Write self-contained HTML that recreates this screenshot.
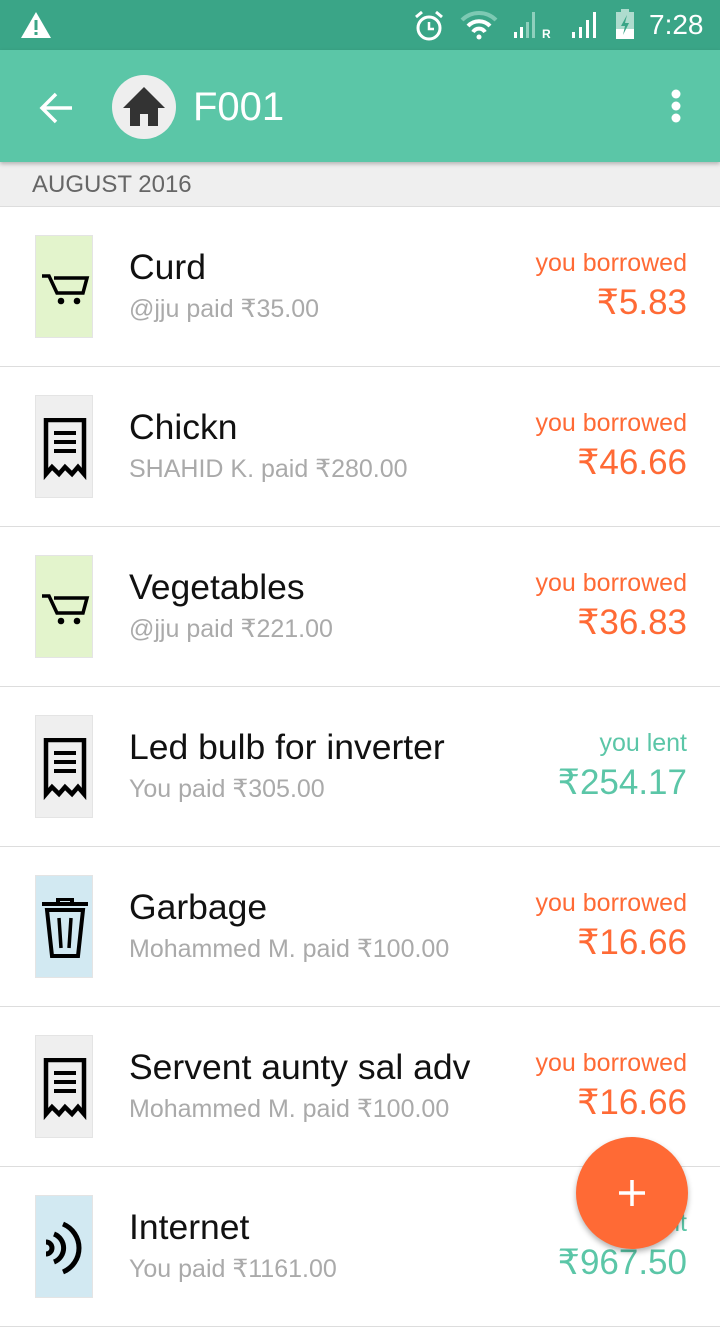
<html><head><style>
body{margin:0;width:720px;height:1280px;overflow:hidden;font-family:"Liberation Sans",sans-serif;background:#fff;position:relative}
.sb{height:50px;background:#3aa587;position:relative;color:#fff}
.ab{height:112px;background:#5bc6a7;position:relative;box-shadow:0 2px 4px rgba(0,0,0,.25);z-index:2}
.hd{height:44px;background:#efefef;border-bottom:1px solid #ddd;color:#666;font-size:24px;line-height:46px;padding-left:32px}
.row{height:159px;border-bottom:1px solid #ddd;position:relative}
.ic{position:absolute;left:35px;top:28px;width:58px;height:103px;border:1px solid #e4e4e4;box-sizing:border-box;overflow:hidden}
.ic svg{position:absolute;left:3px;top:22px}
.t{position:absolute;left:129px;top:40px;font-size:35.5px;color:#111}
.s{position:absolute;left:129px;top:87px;font-size:25px;color:#aaa}
.l{position:absolute;right:33px;top:42px;font-size:25px}
.a{position:absolute;right:33px;top:76px;font-size:35px}
.o{color:#ff6a35}.g{color:#5bc6a7}
</style></head><body>
<div class="sb">
<svg style="position:absolute;left:20px;top:11px" width="32" height="28"><path d="M16 1L31 27H1Z" fill="#fff"/><rect x="14.5" y="9" width="3" height="10" fill="#3aa587"/><rect x="14.5" y="21" width="3" height="3" fill="#3aa587"/></svg>
<svg style="position:absolute;left:412px;top:10px" width="34" height="32"><circle cx="17" cy="18" r="11" fill="none" stroke="#fff" stroke-width="3"/><path d="M17 12v7h5" stroke="#fff" stroke-width="2.5" fill="none"/><path d="M4 7l6-5M30 7l-6-5" stroke="#fff" stroke-width="3"/></svg>
<svg style="position:absolute;left:460px;top:10px" width="38" height="30"><path d="M2 10a24 24 0 0 1 34 0" stroke="#7dc9b3" stroke-width="4" fill="none"/><path d="M8 16a15 15 0 0 1 22 0M13 22a7 7 0 0 1 12 0" stroke="#fff" stroke-width="4" fill="none"/><circle cx="19" cy="27" r="2.5" fill="#fff"/></svg>
<svg style="position:absolute;left:514px;top:10px" width="40" height="30"><rect x="0" y="22" width="3" height="6" fill="#fff"/><rect x="6" y="17" width="3" height="11" fill="#fff"/><rect x="12" y="12" width="3" height="16" fill="#8fd0bd"/><rect x="18" y="2" width="3" height="26" fill="#8fd0bd"/><text x="28" y="28" font-size="12" fill="#fff" font-weight="bold">R</text></svg>
<svg style="position:absolute;left:572px;top:10px" width="30" height="30"><rect x="0" y="22" width="3" height="6" fill="#fff"/><rect x="7" y="17" width="3" height="11" fill="#fff"/><rect x="14" y="10" width="3" height="18" fill="#fff"/><rect x="21" y="2" width="3" height="26" fill="#fff"/></svg>
<svg style="position:absolute;left:614px;top:9px" width="22" height="32"><rect x="7" y="0" width="8" height="3" fill="#aedcce"/><rect x="2" y="3" width="18" height="27" fill="#aedcce"/><rect x="2" y="20" width="18" height="10" fill="#fff"/><path d="M13 6l-6 11h4l-2 9 6-12h-4z" fill="#3aa587"/></svg>
<div style="position:absolute;left:649px;top:9px;font-size:28px">7:28</div>
</div>
<div class="ab">
<svg style="position:absolute;left:38px;top:42px" width="36" height="32"><path d="M34 16H4M18 2L4 16l14 14" stroke="#fff" stroke-width="3.5" fill="none"/></svg>
<div style="position:absolute;left:112px;top:25px;width:64px;height:64px;border-radius:50%;background:#eee"></div>
<svg style="position:absolute;left:120px;top:34px" width="48" height="44"><path d="M24 3L3 24h7v18h10V30h8v12h10V24h7z" fill="#333"/></svg>
<div style="position:absolute;left:193px;top:35px;font-size:40px;color:#fff">F001</div>
<svg style="position:absolute;left:668px;top:38px" width="16" height="40"><circle cx="8" cy="6" r="4.5" fill="#fff"/><circle cx="8" cy="18" r="4.5" fill="#fff"/><circle cx="8" cy="30" r="4.5" fill="#fff"/></svg>
</div>
<div class="hd">AUGUST 2016</div>

<div class="row"><div class="ic" style="background:#e3f4cc"><svg width="52" height="60"><path d="M3 18h7l8 17h26l4-15H15" stroke="#000" stroke-width="3.5" fill="none"/><circle cx="22" cy="43" r="3.3"/><circle cx="38" cy="43" r="3.3"/></svg></div><div class="t">Curd</div><div class="s">@jju paid ₹35.00</div><div class="l o">you borrowed</div><div class="a o">₹5.83</div></div>

<div class="row"><div class="ic" style="background:#efefef"><svg width="52" height="64"><path d="M7 2h38v54l-6-7-6 7-7-7-6 7-7-7-6 7z" fill="none" stroke="#000" stroke-width="4.5"/><path d="M15 15h22M15 24h22M15 33h22" stroke="#000" stroke-width="4"/></svg></div><div class="t">Chickn</div><div class="s">SHAHID K. paid ₹280.00</div><div class="l o">you borrowed</div><div class="a o">₹46.66</div></div>

<div class="row"><div class="ic" style="background:#e3f4cc"><svg width="52" height="60"><path d="M3 18h7l8 17h26l4-15H15" stroke="#000" stroke-width="3.5" fill="none"/><circle cx="22" cy="43" r="3.3"/><circle cx="38" cy="43" r="3.3"/></svg></div><div class="t">Vegetables</div><div class="s">@jju paid ₹221.00</div><div class="l o">you borrowed</div><div class="a o">₹36.83</div></div>

<div class="row"><div class="ic" style="background:#efefef"><svg width="52" height="64"><path d="M7 2h38v54l-6-7-6 7-7-7-6 7-7-7-6 7z" fill="none" stroke="#000" stroke-width="4.5"/><path d="M15 15h22M15 24h22M15 33h22" stroke="#000" stroke-width="4"/></svg></div><div class="t">Led bulb for inverter</div><div class="s">You paid ₹305.00</div><div class="l g">you lent</div><div class="a g">₹254.17</div></div>

<div class="row"><div class="ic" style="background:#d2e9f2"><svg width="52" height="64"><path d="M3 6h46M19 6V1h14v5M8 12h36l-5 46H13z" stroke="#000" stroke-width="4" fill="none"/><path d="M20 20l2 30M32 20l-2 30" stroke="#000" stroke-width="3.5"/></svg></div><div class="t">Garbage</div><div class="s">Mohammed M. paid ₹100.00</div><div class="l o">you borrowed</div><div class="a o">₹16.66</div></div>

<div class="row"><div class="ic" style="background:#efefef"><svg width="52" height="64"><path d="M7 2h38v54l-6-7-6 7-7-7-6 7-7-7-6 7z" fill="none" stroke="#000" stroke-width="4.5"/><path d="M15 15h22M15 24h22M15 33h22" stroke="#000" stroke-width="4"/></svg></div><div class="t">Servent aunty sal adv</div><div class="s">Mohammed M. paid ₹100.00</div><div class="l o">you borrowed</div><div class="a o">₹16.66</div></div>

<div class="row"><div class="ic" style="background:#d2e9f2"><svg width="52" height="80" style="top:14px"><path d="M7 32a6 6 0 0 1 0 12M15 24a15 15 0 0 1 0 28M24 14a26 26 0 0 1 0 48" stroke="#000" stroke-width="5" fill="none"/></svg></div><div class="t">Internet</div><div class="s">You paid ₹1161.00</div><div class="l g">you lent</div><div class="a g">₹967.50</div></div>

<div style="position:absolute;left:576px;top:1137px;width:112px;height:112px;border-radius:50%;background:#ff6a35;box-shadow:0 3px 6px rgba(0,0,0,.3)"><svg style="position:absolute;left:41px;top:41px" width="30" height="30"><path d="M15 2v26M2 15h26" stroke="#fff" stroke-width="3.5"/></svg></div>
</body></html>
